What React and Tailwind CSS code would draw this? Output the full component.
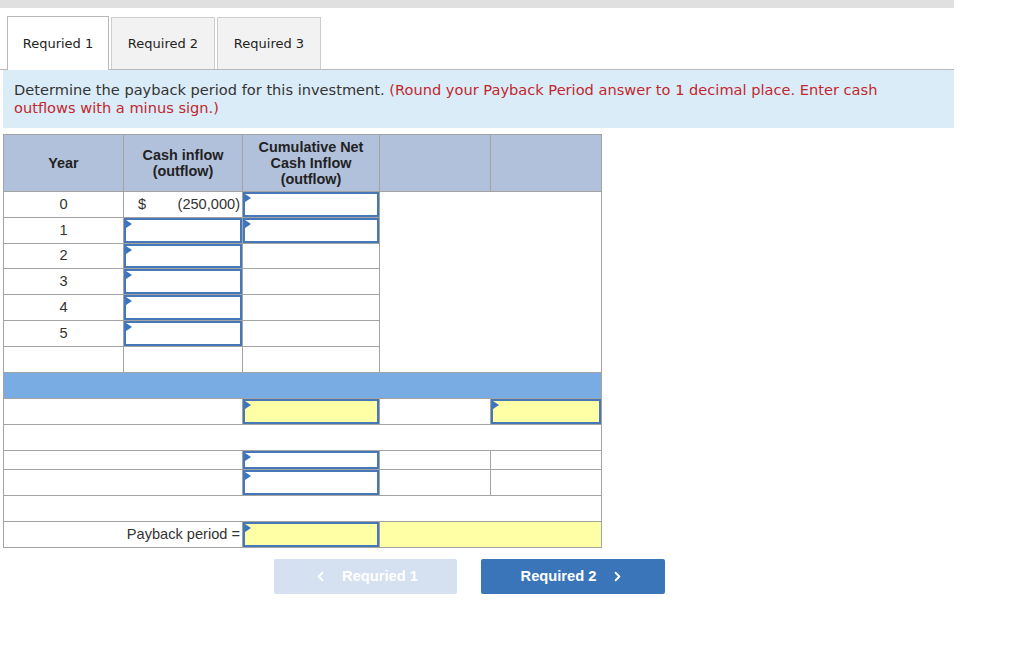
import { ChevronLeft, ChevronRight } from "lucide-react";

const cell = "border border-[#a3a3a3] p-0";

function Flag() {
  return (
    <svg className="absolute left-0 top-0" width="6" height="9" viewBox="0 0 6 9">
      <polygon points="0,0 6,4 0,8" fill="#3a73c0" />
    </svg>
  );
}

function Input({ yellow, h = "h-[25px]" }) {
  return (
    <div className={`relative ${h} border-2 border-[#4677b8] ${yellow ? "bg-[#ffffa6]" : "bg-white"}`}>
      <Flag />
    </div>
  );
}

function Tab({ label, active }) {
  return (
    <div
      className={
        active
          ? "w-[102px] h-[54px] -mb-px flex items-center justify-center bg-white border border-b-0 border-[#b8b8b8]"
          : "w-[104px] h-[52px] flex items-center justify-center bg-[#f2f2f2] border border-b-0 border-[#cccccc]"
      }
    >
      {label}
    </div>
  );
}

export default function App() {
  const years = [1, 2, 3, 4, 5];
  return (
    <div className="w-[1024px] h-[655px] bg-white text-[#333]" style={{ fontFamily: '"Liberation Sans", Arial, sans-serif' }}>
      <div className="h-[8px] w-[954px] bg-[#e0e0e0]" />

      {/* tabs */}
      <div
        className="flex items-end gap-[2px] pl-[7px] pt-[8px] w-[954px] border-b border-[#b8b8b8] text-[13px] text-[#222]"
        style={{ fontFamily: '"DejaVu Sans", Verdana, sans-serif' }}
      >
        <Tab label="Requried 1" active />
        <Tab label="Required 2" />
        <Tab label="Required 3" />
      </div>

      {/* instructions */}
      <div
        className="ml-[3px] w-[951px] h-[58px] bg-[#dbecf9] pl-[11px] pt-[11px] text-[14.6px] leading-[18px] text-[#333]"
        style={{ fontFamily: '"DejaVu Sans", Verdana, sans-serif' }}
      >
        Determine the payback period for this investment.{" "}
        <span className="text-[#c1272d]">
          (Round your Payback Period answer to 1 decimal place. Enter cash
          <br />
          outflows with a minus sign.)
        </span>
      </div>

      {/* table */}
      <table className="mt-[6px] ml-[3px] border-collapse table-fixed text-[14.6px] border border-[#888]">
        <colgroup>
          <col className="w-[120px]" />
          <col className="w-[119px]" />
          <col className="w-[137px]" />
          <col className="w-[111px]" />
          <col className="w-[111px]" />
        </colgroup>
        <thead>
          <tr className="bg-[#b1c1dc] font-bold text-[#222] leading-[16px] text-[14.4px]">
            <th className={`${cell} h-[57px] border-[#888]`}>Year</th>
            <th className={`${cell} border-[#888]`}>
              Cash inflow
              <br />
              (outflow)
            </th>
            <th className={`${cell} border-[#888]`}>
              Cumulative Net
              <br />
              Cash Inflow
              <br />
              (outflow)
            </th>
            <th className={`${cell} border-[#888]`} />
            <th className={`${cell} border-[#888]`} />
          </tr>
        </thead>
        <tbody>
          <tr>
            <td className={`${cell} h-[26px] text-center`}>0</td>
            <td className={cell}>
              <div className="flex justify-between pl-[14px] pr-[2px]">
                <span>$</span>
                <span>(250,000)</span>
              </div>
            </td>
            <td className={cell}>
              <Input />
            </td>
            <td className={`${cell} bg-white`} colSpan={2} rowSpan={7} />
          </tr>
          {years.map((y) => (
            <tr key={y}>
              <td className={`${cell} ${y === 2 ? "h-[25px]" : "h-[26px]"} text-center`}>{y}</td>
              <td className={cell}>
                <Input h={y === 2 ? "h-[24px]" : "h-[25px]"} />
              </td>
              <td className={cell}>{y === 1 ? <Input /> : null}</td>
            </tr>
          ))}
          <tr>
            <td className={`${cell} h-[26px]`} />
            <td className={cell} />
            <td className={cell} />
          </tr>
          <tr>
            <td className={`${cell} h-[26px] bg-[#79ace3] border-[#888]`} colSpan={5} />
          </tr>
          <tr>
            <td className={`${cell} h-[26px]`} colSpan={2} />
            <td className={cell}>
              <Input yellow />
            </td>
            <td className={cell} />
            <td className={cell}>
              <Input yellow />
            </td>
          </tr>
          <tr>
            <td className={`${cell} h-[26px] border-[#888]`} colSpan={5} />
          </tr>
          <tr>
            <td className={`${cell} h-[19px]`} colSpan={2} />
            <td className={cell}>
              <Input h="h-[18px]" />
            </td>
            <td className={cell} />
            <td className={cell} />
          </tr>
          <tr>
            <td className={`${cell} h-[26px]`} colSpan={2} />
            <td className={cell}>
              <Input />
            </td>
            <td className={cell} />
            <td className={cell} />
          </tr>
          <tr>
            <td className={`${cell} h-[26px] border-[#888]`} colSpan={5} />
          </tr>
          <tr>
            <td className={`${cell} h-[26px] text-right pr-[2px]`} colSpan={2}>
              Payback period =
            </td>
            <td className={cell}>
              <Input yellow />
            </td>
            <td className={`${cell} bg-[#ffffa6]`} colSpan={2} />
          </tr>
        </tbody>
      </table>

      {/* nav buttons */}
      <div className="flex gap-[24px] pl-[274px] mt-[11px] text-[14.7px] font-bold text-white">
        <button className="w-[183px] h-[35px] rounded-[2px] bg-[#d5e1f0] flex items-center justify-center gap-[14px]">
          <ChevronLeft size={15} strokeWidth={3} />
          <span>Requried 1</span>
        </button>
        <button className="w-[184px] h-[35px] rounded-[2px] bg-[#3a74b9] flex items-center justify-center gap-[14px]">
          <span>Required 2</span>
          <ChevronRight size={15} strokeWidth={3} />
        </button>
      </div>
    </div>
  );
}
